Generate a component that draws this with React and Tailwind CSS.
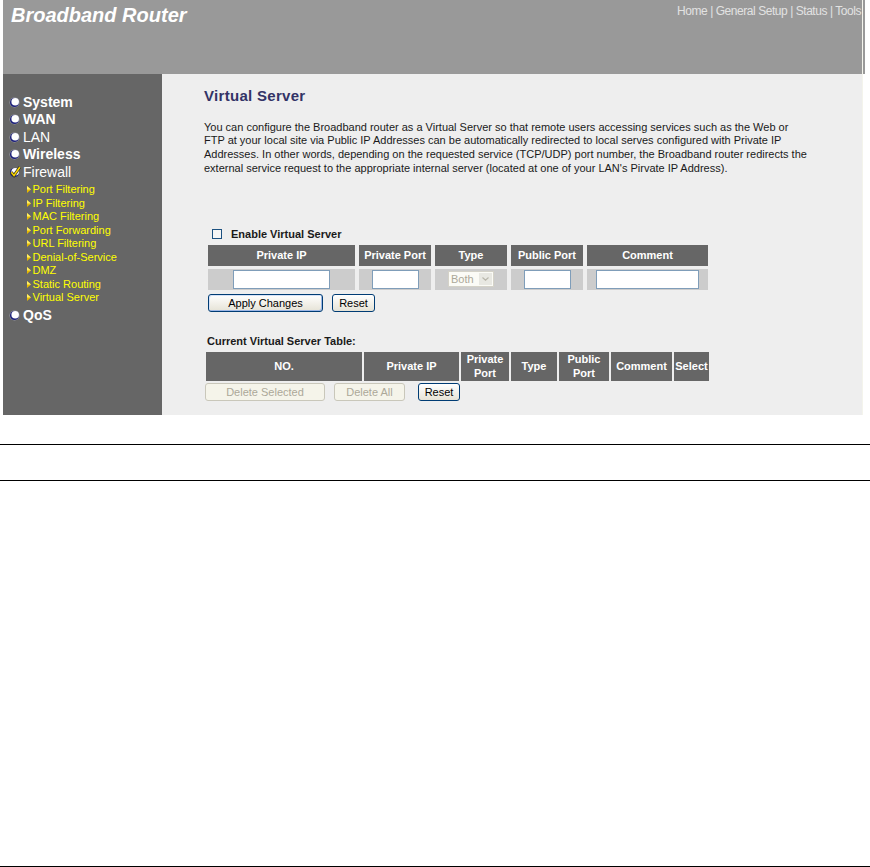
import React from "react";

const Bullet = () => (
  <svg width="11" height="11" viewBox="0 0 11 11" className="shrink-0">
    <circle cx="5.5" cy="5.5" r="5" fill="#9a9aa8" />
    <circle cx="5.5" cy="5.5" r="4.5" fill="#1b1f7a" />
    <circle cx="6.2" cy="4.8" r="3.8" fill="#ffffff" />
  </svg>
);

const CheckBullet = () => (
  <svg width="12" height="12" viewBox="0 0 12 12" className="shrink-0">
    <circle cx="5.5" cy="6.5" r="4.5" fill="#1b1f7a" />
    <circle cx="6.2" cy="5.8" r="3.8" fill="#ffffff" />
    <path d="M2.3 6.3 L5 9.6 L10.8 1.2" stroke="#3a3a20" strokeWidth="3" fill="none" />
    <path d="M2.3 6.3 L5 9.6 L10.8 1.2" stroke="#ffd800" strokeWidth="1.5" fill="none" />
  </svg>
);

const Arrow = () => (
  <svg width="4" height="7" viewBox="0 0 4 7" className="shrink-0">
    <path d="M0 0 L4 3.5 L0 7Z" fill="#e6b800" />
    <path d="M0 0 L4 3.5 L0 3.5Z" fill="#fff066" />
  </svg>
);

const mainItems = ["System", "WAN", "LAN", "Wireless"];
const subItems = [
  "Port Filtering",
  "IP Filtering",
  "MAC Filtering",
  "Port Forwarding",
  "URL Filtering",
  "Denial-of-Service",
  "DMZ",
  "Static Routing",
  "Virtual Server",
];

const Sidebar = () => (
  <div className="w-[159px] shrink-0 bg-[#666666] pl-[6px] pt-[19.5px]">
    {mainItems.map((item) => (
      <div key={item} className="flex items-center gap-[3px] leading-[17.5px]">
        <Bullet />
        <span className={`text-[14px] text-white ${item === "LAN" ? "font-normal" : "font-bold"}`}>
          {item}
        </span>
      </div>
    ))}
    <div className="flex items-center gap-[2px] leading-[17.5px]">
      <CheckBullet />
      <span className="text-[14px] text-white font-normal">Firewall</span>
    </div>
    <div className="my-[2.2px] pl-[18px]">
      {subItems.map((item) => (
        <div key={item} className="flex items-center gap-[1.5px] leading-[13.5px]">
          <Arrow />
          <span className="text-[11px] text-[#ffff00]">{item}</span>
        </div>
      ))}
    </div>
    <div className="flex items-center gap-[3px] leading-[17.5px]">
      <Bullet />
      <span className="text-[14px] text-white font-bold">QoS</span>
    </div>
  </div>
);

const TextBox = ({ w }) => (
  <div className={`h-[19px] ${w} border border-[#7f9db9] bg-white`} />
);

const Btn = ({ children, w, disabled }) => (
  <button
    type="button"
    className={`h-[18px] ${w} rounded-[3px] border text-[11px] leading-none ${
      disabled
        ? "border-[#c9c7ba] bg-[#f5f4ea] text-[#aca899]"
        : "border-[#003c74] bg-linear-to-b from-white to-[#e6e3d6] text-black"
    }`}
  >
    {children}
  </button>
);

const th1 = "h-[21px] bg-[#666666] text-white font-bold text-[11px] flex items-center justify-center";
const td1 = "h-[21px] bg-[#cccccc] flex items-center justify-center";
const th2 = "h-[29px] bg-[#666666] text-white font-bold text-[11px] leading-[14px] flex items-center justify-center text-center";

const Content = () => (
  <div className="flex-1 bg-[#eeeeee] pl-[42px] pt-[12.7px] pb-[14px] text-[#1a1a1a]">
    <h1 className="text-[15px] leading-[18px] font-bold text-[#333366] tracking-[0.3px]">Virtual Server</h1>
    <p className="mt-[16.2px] text-[11px] leading-[13.6px] whitespace-nowrap">
      You can configure the Broadband router as a Virtual Server so that remote users accessing services such as the Web or
      <br />
      FTP at your local site via Public IP Addresses can be automatically redirected to local serves configured with Private IP
      <br />
      Addresses. In other words, depending on the requested service (TCP/UDP) port number, the Broadband router redirects the
      <br />
      external service request to the appropriate internal server (located at one of your LAN's Pirvate IP Address).
    </p>

    <div className="mt-[51.7px] ml-[8px] flex h-[14px] items-center gap-[9px]">
      <div className="h-[10px] w-[10px] border border-[#1c5180] bg-[#f6f6f6]" />
      <span className="text-[11px] font-bold">Enable Virtual Server</span>
    </div>

    <div className="mt-[4px] ml-[4px] grid grid-cols-[147px_72px_72px_72px_121px] gap-x-[4px] gap-y-[3px] w-fit">
      <div className={th1}>Private IP</div>
      <div className={th1}>Private Port</div>
      <div className={th1}>Type</div>
      <div className={th1}>Public Port</div>
      <div className={th1}>Comment</div>
      <div className={td1}><TextBox w="w-[97px]" /></div>
      <div className={td1}><TextBox w="w-[47px]" /></div>
      <div className={td1}>
        <div className="flex h-[16px] w-[46px] items-center border border-[#d4d2c8] bg-[#fbfbf6]">
          <span className="flex-1 pl-[2px] text-[11px] text-[#aca899]">Both</span>
          <div className="mr-[1px] flex h-[12px] w-[13px] items-center justify-center bg-[#e8e8e2]">
            <svg width="7" height="4" viewBox="0 0 7 4">
              <path d="M0.5 0.5 L3.5 3.2 L6.5 0.5" stroke="#b8b6aa" strokeWidth="1.2" fill="none" />
            </svg>
          </div>
        </div>
      </div>
      <div className={td1}><TextBox w="w-[47px]" /></div>
      <div className={td1}><TextBox w="w-[103px]" /></div>
    </div>

    <div className="mt-[4.3px] ml-[4px] flex gap-[9px]">
      <Btn w="w-[115px] shadow-[inset_-1px_-1px_0_#9db7e6,inset_1px_1px_0_#d6e2f7]">Apply Changes</Btn>
      <Btn w="w-[43px]">Reset</Btn>
    </div>

    <div className="mt-[22.9px] ml-[3px] text-[11px] font-bold leading-[13px]">Current Virtual Server Table:</div>

    <div className="mt-[3.8px] ml-[2px] grid grid-cols-[156px_95px_48px_46px_50px_61px_35px] gap-x-[2px] w-fit">
      <div className={th2}>NO.</div>
      <div className={th2}>Private IP</div>
      <div className={th2}>Private<br />Port</div>
      <div className={th2}>Type</div>
      <div className={th2}>Public<br />Port</div>
      <div className={th2}>Comment</div>
      <div className={th2}>Select</div>
    </div>

    <div className="mt-[2.3px] ml-[1px] flex">
      <Btn w="w-[120px]" disabled>Delete Selected</Btn>
      <div className="w-[9px]" />
      <Btn w="w-[71px]" disabled>Delete All</Btn>
      <div className="w-[13px]" />
      <Btn w="w-[42px]">Reset</Btn>
    </div>
  </div>
);

export default function App() {
  return (
    <div className="h-[867px] overflow-hidden bg-white font-['Liberation_Sans',Arial,sans-serif]">
      <div className="ml-[3px] flex w-[862px]">
        <div className="flex w-[859px] flex-col">
          <div className="flex h-[74px] justify-between bg-[#999999]">
            <div className="pl-[8px] pt-[4px] text-[20px] font-bold italic leading-[23px] text-white">
              Broadband Router
            </div>
            <div className="pt-[3px] pr-[1px] text-[12px] leading-[16px] tracking-[-0.45px] text-[#e2e2e2] whitespace-nowrap">
              Home | General Setup | Status | Tools
            </div>
          </div>
          <div className="flex">
            <Sidebar />
            <Content />
          </div>
        </div>
        <div className="w-[1px] bg-[#f4f4ec]" />
        <div className="w-[2px]">
          <div className="h-[74px] bg-[#999999]" />
        </div>
      </div>

      <div className="mt-[29px] h-px bg-black" />
      <div className="mt-[35px] h-px bg-black" />
      <div className="mt-[385px] h-px bg-black" />
    </div>
  );
}
